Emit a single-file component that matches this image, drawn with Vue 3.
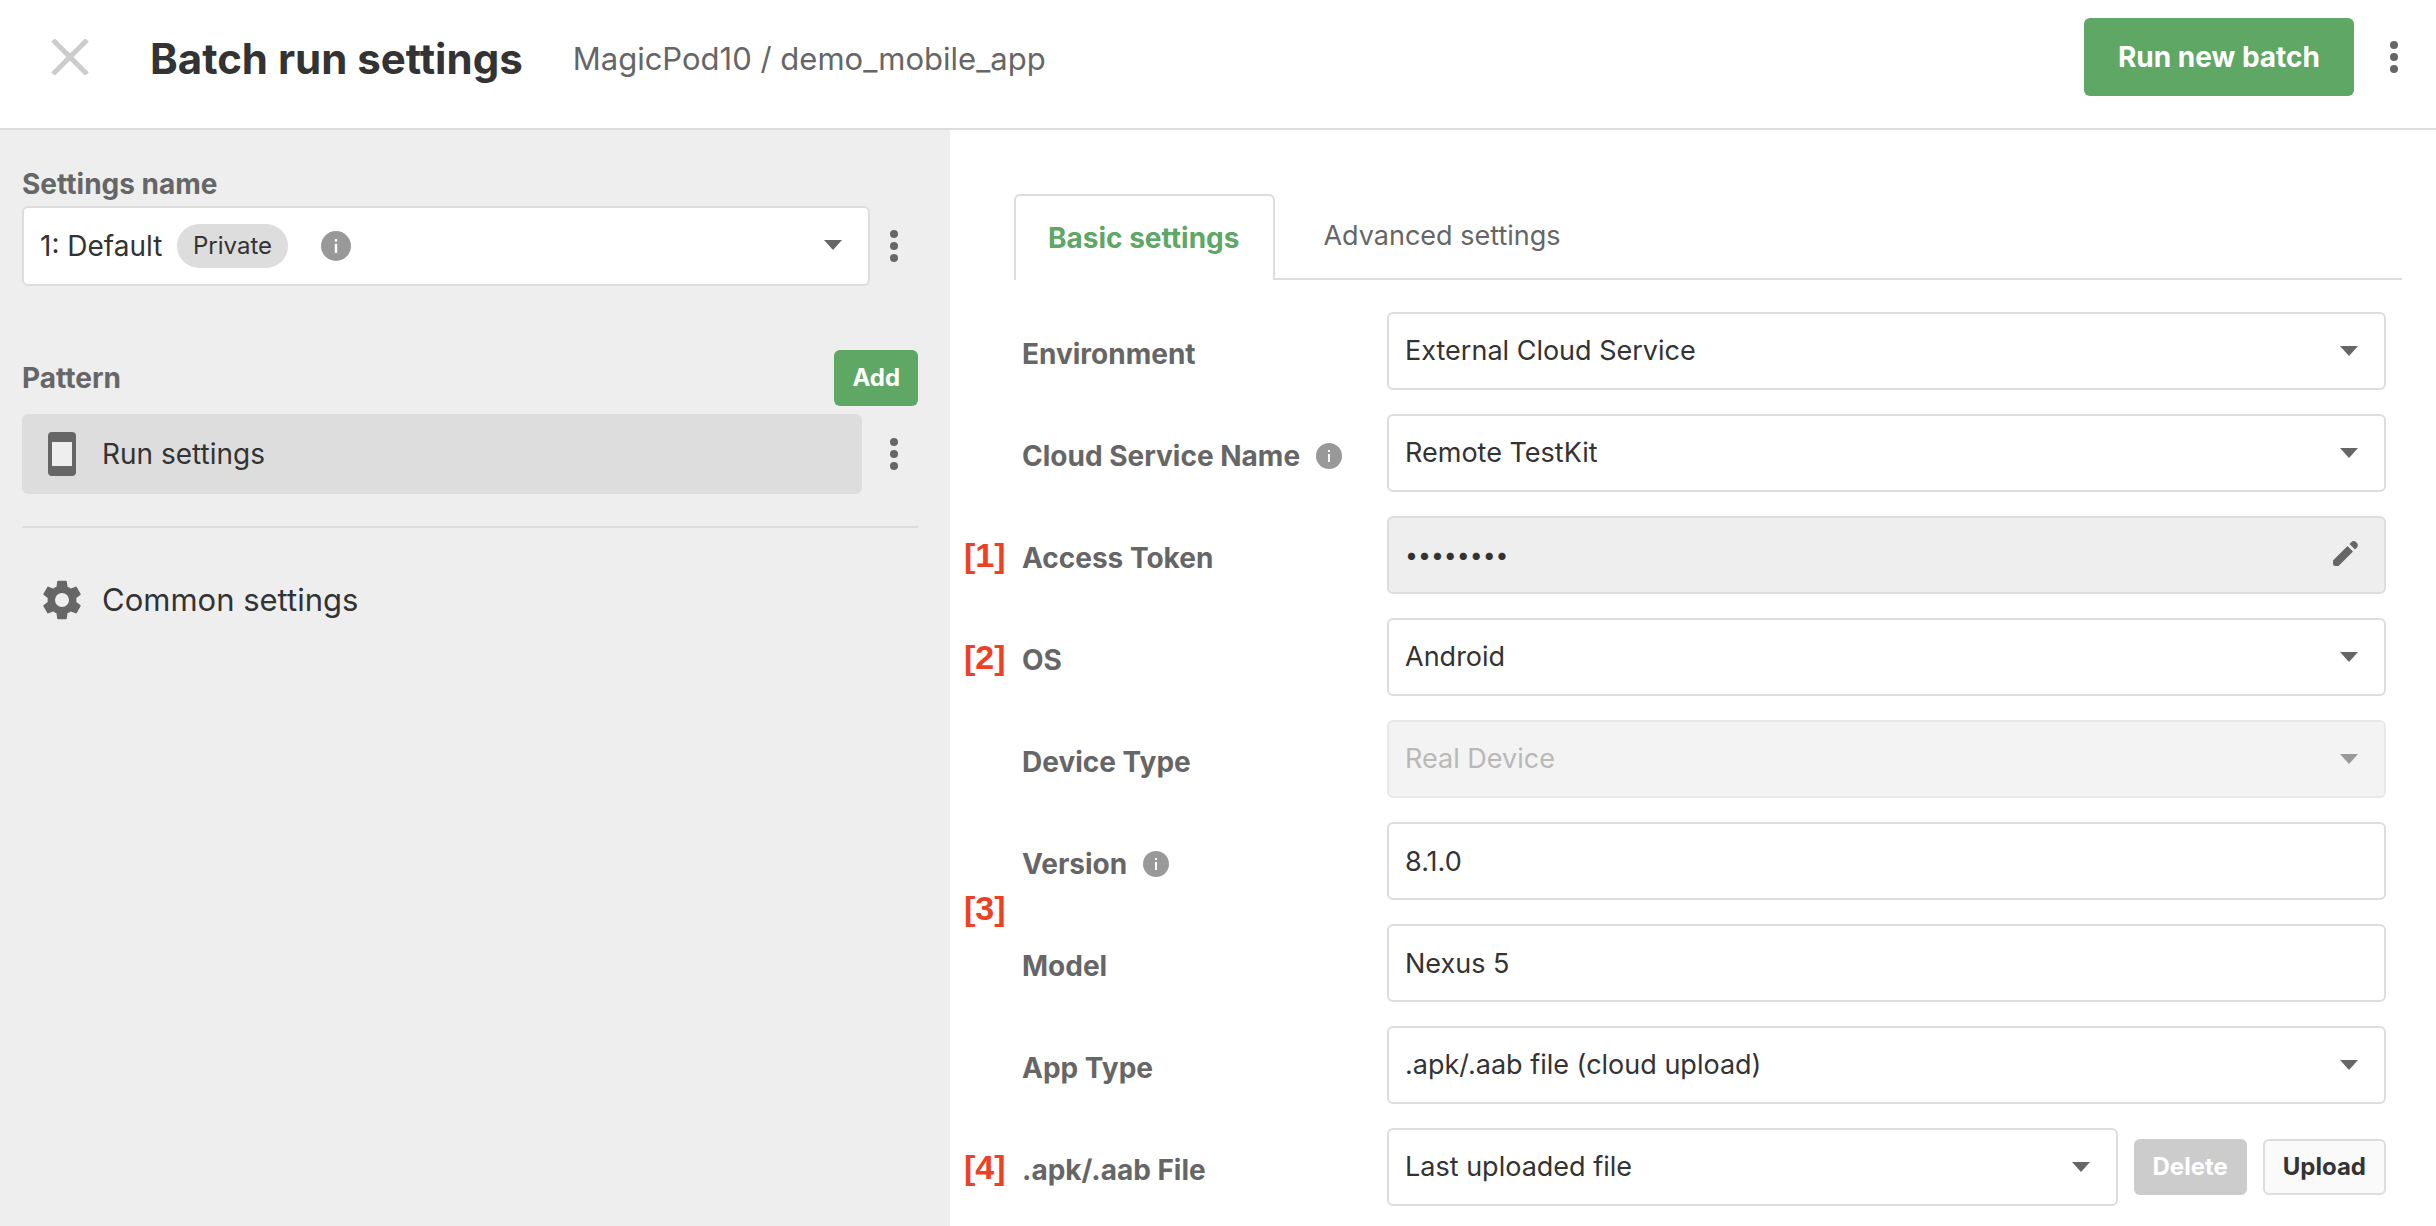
<script setup>
import { ref } from 'vue'

const rows = ref([
  { id: 'environment', label: 'Environment', type: 'select', value: 'External Cloud Service' },
  { id: 'service', label: 'Cloud Service Name', type: 'select', value: 'Remote TestKit', info: true },
  { id: 'token', label: 'Access Token', type: 'password', value: 'password', mark: '[1]' },
  { id: 'os', label: 'OS', type: 'select', value: 'Android', mark: '[2]' },
  { id: 'device', label: 'Device Type', type: 'select', value: 'Real Device', disabled: true },
  { id: 'version', label: 'Version', type: 'text', value: '8.1.0', info: true, mark: '[3]', span: true },
  { id: 'model', label: 'Model', type: 'text', value: 'Nexus 5' },
  { id: 'apptype', label: 'App Type', type: 'select', value: '.apk/.aab file (cloud upload)' },
  { id: 'file', label: '.apk/.aab File', type: 'file', value: 'Last uploaded file', mark: '[4]' },
])
</script>

<template>
  <div class="page">
    <header class="header">
      <button class="icon-btn close" aria-label="Close">
        <svg width="38" height="36" viewBox="0 0 38 36"><path d="M2 1 36 35M36 1 2 35" stroke="#ccc" stroke-width="5" fill="none" /></svg>
      </button>
      <div class="titles">
        <h1>Batch run settings</h1>
        <span class="project">MagicPod10 / demo_mobile_app</span>
      </div>
      <button class="btn primary large">Run new batch</button>
      <button class="icon-btn kebab" aria-label="Batch menu">
        <svg width="8" height="32" viewBox="0 0 8 32"><circle cx="4" cy="4" r="4" /><circle cx="4" cy="16" r="4" /><circle cx="4" cy="28" r="4" /></svg>
      </button>
    </header>

    <div class="body">
      <aside class="sidebar">
        <label class="heading" for="setting">Settings name</label>
        <div class="line">
          <div class="select tall">
            <select id="setting"><option>1: Default</option></select>
            <div class="badges">
              <span class="pill">Private</span>
              <svg class="info" viewBox="0 0 26 26"><circle cx="13" cy="13" r="13" /><path d="M12 7h2v2h-2zM12 11h2v8h-2z" /></svg>
            </div>
            <svg class="caret" viewBox="0 0 18 10"><path d="M0 0h18L9 10z" /></svg>
          </div>
          <button class="icon-btn kebab" aria-label="Settings menu">
            <svg width="8" height="32" viewBox="0 0 8 32"><circle cx="4" cy="4" r="4" /><circle cx="4" cy="16" r="4" /><circle cx="4" cy="28" r="4" /></svg>
          </button>
        </div>

        <div class="pattern-head">
          <h2 class="heading">Pattern</h2>
          <button class="btn primary">Add</button>
        </div>
        <div class="line">
          <button class="nav active">
            <svg width="36" height="44" viewBox="0 0 36 44"><path d="M8 8h20v28H8z" fill="#eee" /><path fill-rule="evenodd" d="M8 0h20a4 4 0 0 1 4 4v36a4 4 0 0 1-4 4H8a4 4 0 0 1-4-4V4a4 4 0 0 1 4-4zM8 10v24h20V10z" /></svg>
            Run settings
          </button>
          <button class="icon-btn kebab" aria-label="Pattern menu">
            <svg width="8" height="32" viewBox="0 0 8 32"><circle cx="4" cy="4" r="4" /><circle cx="4" cy="16" r="4" /><circle cx="4" cy="28" r="4" /></svg>
          </button>
        </div>
        <hr />
        <button class="nav common">
          <svg width="40" height="40" viewBox="2 2 20 20"><path d="M19.14 12.94c.04-.3.06-.61.06-.94 0-.32-.02-.64-.07-.94l2.03-1.58a.49.49 0 0 0 .12-.61l-1.92-3.32a.488.488 0 0 0-.59-.22l-2.39.96c-.5-.38-1.03-.7-1.62-.94l-.36-2.54a.484.484 0 0 0-.48-.41h-3.84c-.24 0-.43.17-.47.41l-.36 2.54c-.59.24-1.13.57-1.62.94l-2.39-.96c-.22-.08-.47 0-.59.22L2.74 8.87c-.12.21-.08.47.12.61l2.03 1.58c-.05.3-.09.63-.09.94s.02.64.07.94l-2.03 1.58a.49.49 0 0 0-.12.61l1.92 3.32c.12.22.37.29.59.22l2.39-.96c.5.38 1.03.7 1.62.94l.36 2.54c.05.24.24.41.48.41h3.84c.24 0 .44-.17.47-.41l.36-2.54c.59-.24 1.13-.56 1.62-.94l2.39.96c.22.08.47 0 .59-.22l1.92-3.32c.12-.22.07-.47-.12-.61l-2.01-1.58zM12 15.5A3.5 3.5 0 1 1 12 8.5a3.5 3.5 0 0 1 0 7z" /></svg>
          Common settings
        </button>
      </aside>

      <main class="content">
        <div class="tabs" role="tablist">
          <button class="tab selected" role="tab" aria-selected="true">Basic settings</button>
          <button class="tab" role="tab" aria-selected="false">Advanced settings</button>
        </div>

        <form class="form" @submit.prevent>
          <template v-for="row in rows" :key="row.id">
            <span v-if="row.mark" class="mark" :class="{ span: row.span }">{{ row.mark }}</span>
            <div class="label">
              <label :for="row.id">{{ row.label }}</label>
              <svg v-if="row.info" class="info" viewBox="0 0 26 26"><circle cx="13" cy="13" r="13" /><path d="M12 7h2v2h-2zM12 11h2v8h-2z" /></svg>
            </div>
            <div class="control">
              <div v-if="row.type === 'select' || row.type === 'file'" class="select" :class="{ disabled: row.disabled }">
                <select :id="row.id" :disabled="row.disabled"><option>{{ row.value }}</option></select>
                <svg class="caret" viewBox="0 0 18 10"><path d="M0 0h18L9 10z" /></svg>
              </div>
              <div v-else-if="row.type === 'password'" class="select">
                <input :id="row.id" type="password" :value="row.value" readonly />
                <button type="button" class="icon-btn edit" aria-label="Edit access token">
                  <svg width="25" height="25" viewBox="0 0 25 25"><path d="M0 19.500 14.500 5 20 10.500 6 24.500Q5.500 25 4.500 25H2.500Q0 25 0 22.500zM16.500 3 18.500 1Q21 -1 23.500 1.500T24 6.500L22 8.500z" /></svg>
                </button>
              </div>
              <input v-else :id="row.id" v-model="row.value" type="text" />
              <template v-if="row.type === 'file'">
                <button type="button" class="btn delete" disabled>Delete</button>
                <button type="button" class="btn upload">Upload</button>
              </template>
            </div>
          </template>
        </form>
      </main>
    </div>
  </div>
</template>

<style>
body { margin: 0; background: #fff; }
</style>

<style scoped>
* { box-sizing: border-box; }
.page {
  display: flex;
  flex-direction: column;
  min-height: 100vh;
  font-family: Inter, "Liberation Sans", sans-serif;
  font-size: 28px;
  line-height: 36px;
  color: #333;
}
button, input, select { font: inherit; color: inherit; margin: 0; }
button { border: 0; background: none; padding: 0; cursor: pointer; white-space: nowrap; }
svg { display: block; flex: none; fill: #666; }

.header {
  display: flex;
  align-items: center;
  padding: 18px 38px 32px 51px;
  border-bottom: 2px solid #ddd;
}
.titles { display: flex; align-items: center; gap: 50px; margin-left: 61px; padding-top: 3px; white-space: nowrap; }
h1 { margin: 0; font-size: 42px; line-height: 48px; font-weight: 700; }
.project { font-size: 31px; color: #666; }
.btn {
  flex: none;
  height: 56px;
  padding: 0 18px;
  border-radius: 6px;
  font-size: 24px;
  font-weight: 700;
}
.primary { background: #5fa765; color: #fff; }
.large { height: 78px; margin-left: auto; padding: 0 34px; font-size: 28px; }
.header .kebab { margin-left: 36px; }

.body { display: flex; flex: 1; }
.sidebar {
  display: flex;
  flex-direction: column;
  flex: none;
  width: 39%;
  padding: 36px 32px 36px 22px;
  background: #eee;
}
.heading { margin: 0 0 4px; font-size: 28px; line-height: 36px; font-weight: 700; color: #666; }
.line { display: flex; align-items: center; }
.line > :first-child { flex: 1; min-width: 0; }
.line .kebab { margin: 0 20px; }
.pattern-head { display: flex; justify-content: space-between; align-items: center; margin: 64px 0 8px; }
.pattern-head .heading { margin: 0; }
.badges { position: absolute; left: 155px; top: 0; bottom: 0; display: flex; align-items: center; gap: 33px; }
.pill { padding: 4px 16px; border-radius: 22px; background: #ddd; font-size: 24px; }
.info { width: 26px; height: 26px; }
.badges .info { width: 30px; height: 30px; }
.info circle { fill: #999; }
.info path { fill: #fff; }
.nav { display: flex; align-items: center; gap: 22px; height: 80px; padding: 0 22px; border-radius: 6px; text-align: left; }
.nav.active { background: #ddd; margin-right: 8px; }
.common { gap: 20px; padding: 0 20px; font-size: 31px; }
hr { width: 100%; height: 2px; margin: 32px 0; border: 0; background: #ddd; }

.content { flex: 1; min-width: 0; padding: 64px 34px 20px 16px; }
.tabs { display: flex; margin-left: 48px; height: 86px; }
.tab { padding: 0 48px; border-bottom: 2px solid #ddd; font-size: 27px; color: #666; }
.tab.selected { padding: 0 34px 0 32px; border: 2px solid #ddd; border-bottom: 0; border-radius: 6px 6px 0 0; color: #5fa765; font-size: 28px; font-weight: 700; }
.tabs::after { content: ""; flex: 1; border-bottom: 2px solid #ddd; }

.form {
  display: grid;
  grid-template-columns: 56px 365px 1fr;
  grid-auto-rows: 78px;
  row-gap: 24px;
  padding: 32px 16px 0 0;
}
.mark { grid-column: 1; align-self: center; margin-left: -2px; font-family: "Liberation Sans", Arial, sans-serif; font-size: 34px; font-weight: 700; color: #ee4023; }
.mark.span { grid-row: 6 / span 2; padding-bottom: 8px; }
.label { grid-column: 2; display: flex; align-items: center; gap: 16px; padding-top: 6px; font-weight: 700; color: #666; white-space: nowrap; }
.control { grid-column: 3; display: flex; align-items: center; gap: 16px; min-width: 0; }
.select { position: relative; flex: 1; min-width: 0; height: 78px; }
.tall { height: 80px; }
select, input {
  width: 100%;
  height: 100%;
  padding: 0 16px;
  border: 2px solid #ddd;
  border-radius: 6px;
  background: #fff;
  font-size: 27px;
  appearance: none;
  outline: 0;
}
.tall select { font-size: 28px; }
input[type="password"] { background: #eee; font-size: 23px; }
.caret { position: absolute; right: 28px; top: 34px; width: 18px; height: 10px; pointer-events: none; }
.disabled select { background: #f3f3f3; border-color: #e8e8e8; color: #b8b8b8; opacity: 1; }
.disabled .caret { fill: #999; }
.edit { position: absolute; right: 28px; top: 25px; }
.delete { padding: 0 19px; background: #ccc; color: #fff; }
.upload { border: 2px solid #ddd; background: #fafafa; color: #333; }
</style>
